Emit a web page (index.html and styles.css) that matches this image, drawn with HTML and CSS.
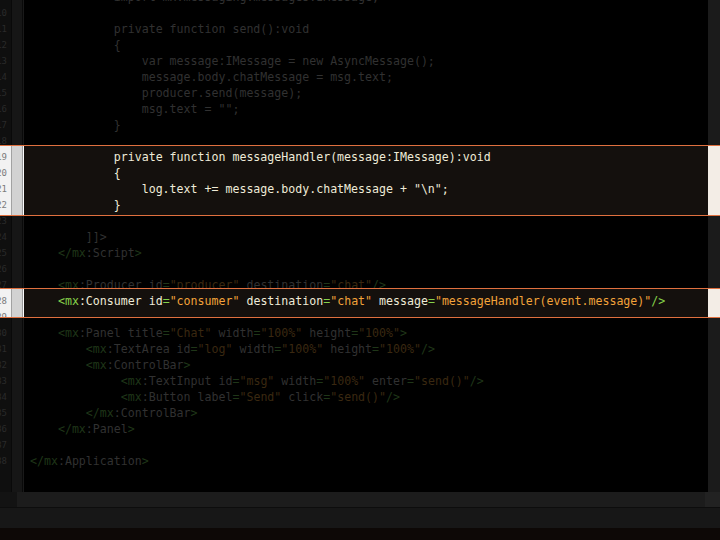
FILE: index.html
```html
<!DOCTYPE html>
<html lang="en">
<head>
    <meta charset="UTF-8">
    <title>ChatClient.mxml</title>
    <link rel="stylesheet" href="styles.css">
</head>
<body>
    <!-- Code editor, dimmed except the highlighted blocks -->
    <div class="editor">
        <div class="lines">
            <div class="ln"><span class="num">9</span><code>            import mx.messaging.messages.IMessage;</code></div>
            <div class="ln"><span class="num">10</span><code></code></div>
            <div class="ln"><span class="num">11</span><code>            private function send():void</code></div>
            <div class="ln"><span class="num">12</span><code>            {</code></div>
            <div class="ln"><span class="num">13</span><code>                var message:IMessage = new AsyncMessage();</code></div>
            <div class="ln"><span class="num">14</span><code>                message.body.chatMessage = msg.text;</code></div>
            <div class="ln"><span class="num">15</span><code>                producer.send(message);</code></div>
            <div class="ln"><span class="num">16</span><code>                msg.text = "";</code></div>
            <div class="ln"><span class="num">17</span><code>            }</code></div>
            <div class="ln"><span class="num">18</span><code></code></div>

            <!-- First highlight: the handler -->
            <div class="spot spot-a">
                <div class="ln"><span class="num">19</span><code>            private function messageHandler(message:IMessage):void</code></div>
                <div class="ln"><span class="num">20</span><code>            {</code></div>
                <div class="ln"><span class="num">21</span><code>                log.text += message.body.chatMessage + "\n";</code></div>
                <div class="ln"><span class="num">22</span><code>            }</code></div>
            </div>

            <div class="ln"><span class="num">23</span><code></code></div>
            <div class="ln"><span class="num">24</span><code>        ]]&gt;</code></div>
            <div class="ln"><span class="num">25</span><code>    <span class="t">&lt;/mx</span>:Script<span class="t">&gt;</span></code></div>
            <div class="ln"><span class="num">26</span><code></code></div>
            <div class="ln"><span class="num">27</span><code>    <span class="t">&lt;mx</span>:Producer id<span class="t">=</span><span class="v">"producer"</span> destination<span class="t">=</span><span class="v">"chat"</span><span class="t">/&gt;</span></code></div>

            <!-- Second highlight: the consumer -->
            <div class="spot spot-b">
                <div class="ln"><span class="num">28</span><code>    <span class="t">&lt;mx</span>:Consumer id<span class="t">=</span><span class="v">"consumer"</span> destination<span class="t">=</span><span class="v">"chat"</span> message<span class="t">=</span><span class="v">"messageHandler(event.message)"</span><span class="t">/&gt;</span></code></div>
                <div class="ln"><span class="num">29</span><code></code></div>
            </div>

            <div class="ln"><span class="num">30</span><code>    <span class="t">&lt;mx</span>:Panel title<span class="t">=</span><span class="v">"Chat"</span> width<span class="t">=</span><span class="v">"100%"</span> height<span class="t">=</span><span class="v">"100%"</span><span class="t">&gt;</span></code></div>
            <div class="ln"><span class="num">31</span><code>        <span class="t">&lt;mx</span>:TextArea id<span class="t">=</span><span class="v">"log"</span> width<span class="t">=</span><span class="v">"100%"</span> height<span class="t">=</span><span class="v">"100%"</span><span class="t">/&gt;</span></code></div>
            <div class="ln"><span class="num">32</span><code>        <span class="t">&lt;mx</span>:ControlBar<span class="t">&gt;</span></code></div>
            <div class="ln"><span class="num">33</span><code>             <span class="t">&lt;mx</span>:TextInput id<span class="t">=</span><span class="v">"msg"</span> width<span class="t">=</span><span class="v">"100%"</span> enter<span class="t">=</span><span class="v">"send()"</span><span class="t">/&gt;</span></code></div>
            <div class="ln"><span class="num">34</span><code>             <span class="t">&lt;mx</span>:Button label<span class="t">=</span><span class="v">"Send"</span> click<span class="t">=</span><span class="v">"send()"</span><span class="t">/&gt;</span></code></div>
            <div class="ln"><span class="num">35</span><code>        <span class="t">&lt;/mx</span>:ControlBar<span class="t">&gt;</span></code></div>
            <div class="ln"><span class="num">36</span><code>    <span class="t">&lt;/mx</span>:Panel<span class="t">&gt;</span></code></div>
            <div class="ln"><span class="num">37</span><code></code></div>
            <div class="ln"><span class="num">38</span><code><span class="t">&lt;/mx</span>:Application<span class="t">&gt;</span></code></div>
        </div>
    </div>

    <!-- Horizontal scroller and status bar -->
    <div class="hscroll"></div>
    <div class="status"></div>
    <div class="desk"></div>
</body>
</html>
```

FILE: styles.css
```css
/* Page */
body {
    margin: 0;
    width: 720px;
    height: 540px;
    overflow: hidden;
    background-color: #000;
    font-family: "DejaVu Sans Mono", "Liberation Mono", monospace;
}

/* Editor with gutter, code area and scrollbar as columns */
.editor {
    height: 492px;
    overflow: hidden;
    background: linear-gradient(to right,
        #0f0f0f 0 11px, #090909 11px 12px, #161616 12px 22px,
        #090909 22px 23px, #191919 23px 24px, #000 24px 708px, #1b1b1b 708px);
}

.lines {
    margin-top: -11px; /* line 9 is cut off at the top */
}

/* One line of code */
.ln {
    display: flex;
    height: 16px;
    line-height: 16px;
}

.num {
    width: 11px;
    padding-right: 4px;
    box-sizing: border-box;
    display: flex;
    justify-content: flex-end; /* overflow goes out on the left */
    overflow: hidden;
    font-size: 9px;
    color: #2a2a2a;
}

.ln code {
    padding-left: 19px; /* 13px to the code column, 6px to the text */
    font-family: inherit;
    font-size: 11.6px;
    white-space: pre;
    color: #313131;
}

.t { color: #1f3618; }
.v { color: #3a2810; }

/* Highlighted blocks */
.spot {
    position: relative;
    z-index: 1;
    border-top: 1px solid #e0703f;
    border-bottom: 1px solid #e0703f;
    background: linear-gradient(to right,
        #f2f2f2 0 11px, #a2a2a2 11px 12px, #d2d2d2 12px 22px,
        #9a9a9a 22px 23px, #fbfbfb 23px 24px, #14100d 24px 708px, #f3ede6 708px);
}

.spot .num { color: #7c7c7c; }
.spot .ln code { color: #efebd8; }
.spot .t { color: #86d24a; }
.spot .v { color: #f2a33a; }

.spot-a {
    margin: -4px 0 -3px;
    padding: 3px 0 2px;
}

.spot-b {
    margin: -5px 0 7px;
    padding-top: 4px;
    height: 30px;
    box-sizing: border-box;
    overflow: hidden;
}

/* Bottom bars */
.hscroll {
    height: 15px;
    background: linear-gradient(to right, #131313 0 17px, #1c1c1c 17px 705px, #222 705px);
}

.status {
    height: 20px;
    border-top: 1px solid #0d0d0d;
    background-color: #171717;
}

.desk {
    height: 13px;
    background-color: #0d0806;
}
```
